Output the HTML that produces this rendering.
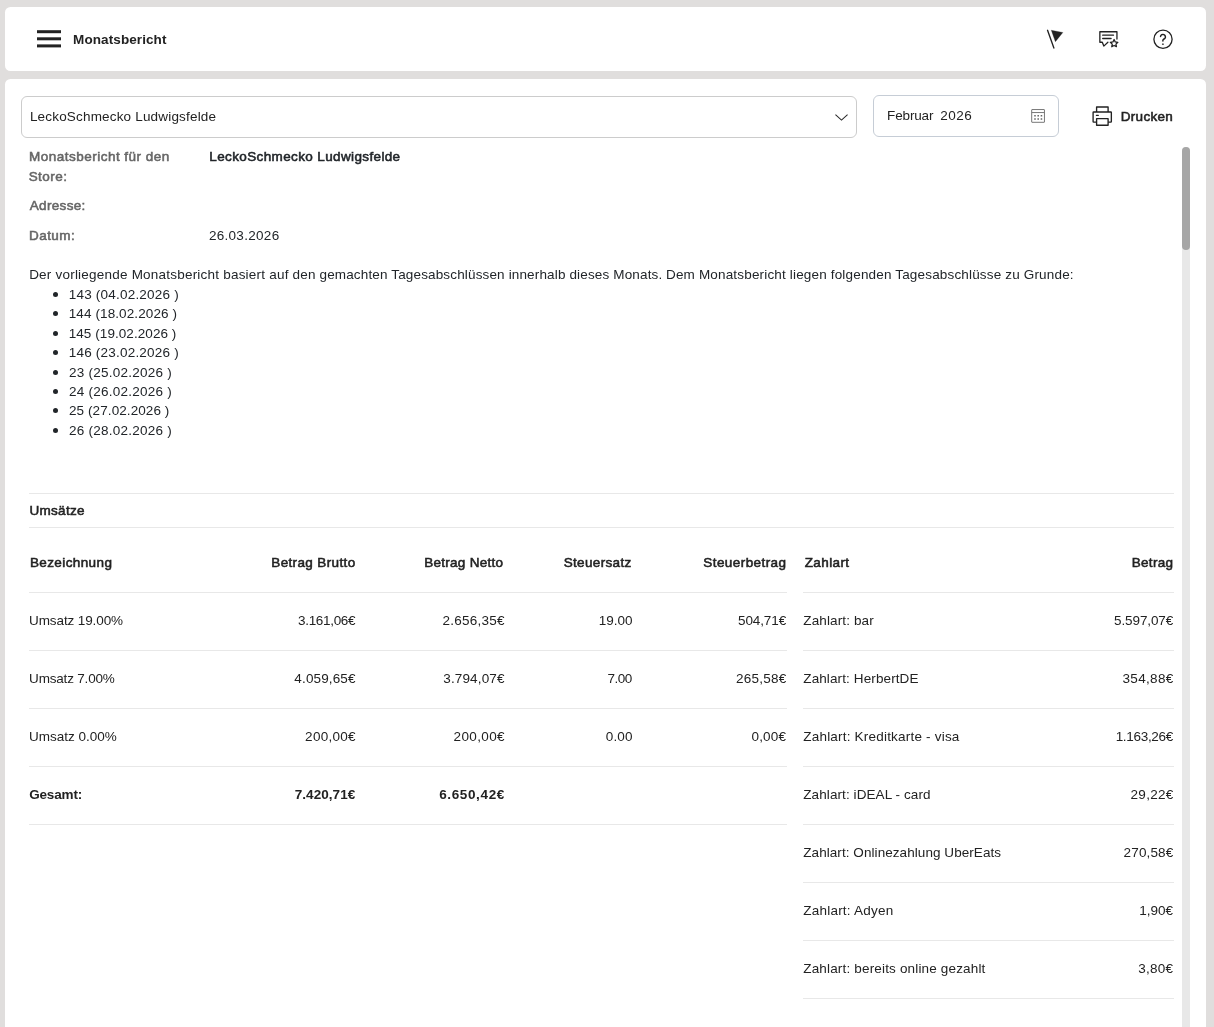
<!DOCTYPE html>
<html lang="de"><head><meta charset="utf-8"><title>Monatsbericht</title>
<style>
html,body{margin:0;padding:0}
body{width:1214px;height:1027px;overflow:hidden;background:#e0dedd;position:relative;font-family:"Liberation Sans",sans-serif;color:#222}
.abs{position:absolute}
.card{position:absolute;background:#fff}
.txt{position:absolute;left:0;top:0;width:1214px;height:1027px;will-change:transform}
.t{position:absolute;display:block;margin:0;padding:0;border:0;white-space:nowrap;line-height:20px;font-weight:400;list-style:none;text-align:left}
header,main,section,dl,p,ul,table,thead,tbody,tr,.toolbar,.date{display:block;margin:0;padding:0;border:0;position:static}
.hl{position:absolute;height:1px;background:#e8e8e8}
.bu{position:absolute;width:5.2px;height:5.2px;border-radius:50%;background:#212529}
</style></head><body>

<div class="card" style="left:5px;top:7px;width:1201px;height:64px;border-radius:5.5px"></div>
<div class="card" style="left:5px;top:79px;width:1201px;height:960px;border-radius:5.5px 5.5px 0 0"></div>
<!-- hamburger -->
<svg class="abs" style="left:37px;top:30px" width="24" height="18" viewBox="0 0 24 18"><rect x="0" y="0.2" width="24" height="3" fill="#222"/><rect x="0" y="7.3" width="24" height="3" fill="#222"/><rect x="0" y="14.4" width="24" height="3" fill="#222"/></svg>
<!-- flag -->
<svg class="abs" style="left:1044px;top:27px" width="24" height="24" viewBox="0 0 24 24"><path d="M3.54 3.3 L9.89 21.1" stroke="#222" stroke-width="1.35" stroke-linecap="round" fill="none"/><path d="M7.3 3.25 L18.85 5.5 L11.4 14.65 Z" fill="#222" stroke="#222" stroke-width="0.3" stroke-linejoin="round"/></svg>
<!-- feedback -->
<svg class="abs" style="left:1097px;top:27px" width="24" height="24" viewBox="0 0 24 24" fill="none" stroke="#222" stroke-width="1.3" stroke-linecap="round" stroke-linejoin="round"><path d="M19.95 12.1 V4.75 H2.85 V15.25 H5.3 L6.8 19.1 L10.9 15.2"/><path d="M5.7 8.2 H16.5 M5.7 11.5 H14.1" stroke-width="1.3"/><path d="M17.10 12.55 L18.25 14.92 L20.86 15.28 L18.95 17.10 L19.42 19.70 L17.10 18.45 L14.78 19.70 L15.25 17.10 L13.34 15.28 L15.95 14.92Z" stroke-width="1.3" stroke-linejoin="round"/></svg>
<!-- help -->
<svg class="abs" style="left:1151px;top:27px" width="24" height="24" viewBox="0 0 24 24" fill="none" stroke="#222" stroke-linecap="round" stroke-linejoin="round"><circle cx="12" cy="12.25" r="9.1" stroke-width="1.3"/><path d="M9.55 9.45 A2.45 2.45 0 1 1 13.95 11.3 C13.3 12.1 11.9 12.1 11.9 13.3 V14.05" stroke-width="1.5"/><rect x="10.95" y="16.55" width="1.9" height="1.3" rx="0.4" fill="#222" stroke="none"/></svg>
<!-- select -->
<div class="abs" style="left:21px;top:96px;width:834px;height:40px;border:1px solid #ccc;border-radius:6px;background:#fff"></div>
<svg class="abs" style="left:833px;top:112px" width="16" height="10" viewBox="0 0 16 10" fill="none" stroke="#2a2a2a" stroke-width="1.05"><path d="M2.45 2.55 L8.5 8.1 L14.55 2.55"/></svg>
<!-- date -->
<div class="abs" style="left:873px;top:95px;width:184px;height:40px;border:1px solid #c6cdd6;border-radius:6px;background:#fff"></div>
<svg class="abs" style="left:1031px;top:109px" width="14" height="14" viewBox="0 0 14 14" fill="none" stroke="#777" stroke-width="1"><rect x="0.7" y="0.55" width="12.75" height="12.75" rx="0.3"/><path d="M0.7 3.55 H13.45"/><g fill="#666" stroke="none"><rect x="3.20" y="6.00" width="1.6" height="1.6" rx=".3"/><rect x="6.40" y="6.00" width="1.6" height="1.6" rx=".3"/><rect x="9.65" y="6.00" width="1.6" height="1.6" rx=".3"/><rect x="3.20" y="9.24" width="1.6" height="1.6" rx=".3"/><rect x="6.40" y="9.24" width="1.6" height="1.6" rx=".3"/><rect x="9.65" y="9.24" width="1.6" height="1.6" rx=".3"/></g></svg>
<!-- print -->
<svg class="abs" style="left:1091px;top:105px" width="22" height="22" viewBox="0 0 22 22" fill="none" stroke="#222" stroke-width="1.35" stroke-linejoin="round"><path d="M5.6 6.95 V1.95 H17.1 V6.95"/><path d="M5.6 17.1 H2.6 a.5 .5 0 0 1 -.5 -.5 V7.45 a.5 .5 0 0 1 .5 -.5 H19.85 a.5 .5 0 0 1 .5 .5 V16.6 a.5 .5 0 0 1 -.5 .5 H17.1"/><rect x="5.6" y="13.65" width="11.5" height="6.55"/><path d="M5.4 10.4 H7.3" stroke-width="1.2" stroke-linecap="round"/></svg>
<!-- scrollbar -->
<div class="abs" style="left:1182px;top:147px;width:8px;height:900px;background:#e8e8e8;border-radius:4px"></div>
<div class="abs" style="left:1182px;top:147px;width:8px;height:103px;background:#a6a6a6;border-radius:4px"></div>

<div class="hl" style="left:29px;top:493px;width:1145px"></div>
<div class="hl" style="left:29px;top:527px;width:1145px"></div>
<div class="hl" style="left:29px;top:592px;width:758px"></div>
<div class="hl" style="left:29px;top:650px;width:758px"></div>
<div class="hl" style="left:29px;top:708px;width:758px"></div>
<div class="hl" style="left:29px;top:766px;width:758px"></div>
<div class="hl" style="left:29px;top:824px;width:758px"></div>
<div class="hl" style="left:803px;top:592px;width:371px"></div>
<div class="hl" style="left:803px;top:650px;width:371px"></div>
<div class="hl" style="left:803px;top:708px;width:371px"></div>
<div class="hl" style="left:803px;top:766px;width:371px"></div>
<div class="hl" style="left:803px;top:824px;width:371px"></div>
<div class="hl" style="left:803px;top:882px;width:371px"></div>
<div class="hl" style="left:803px;top:940px;width:371px"></div>
<div class="hl" style="left:803px;top:998px;width:371px"></div>
<div class="bu" style="left:52.9px;top:291.9px"></div>
<div class="bu" style="left:52.9px;top:310.9px"></div>
<div class="bu" style="left:52.9px;top:330.9px"></div>
<div class="bu" style="left:52.9px;top:349.9px"></div>
<div class="bu" style="left:52.9px;top:369.9px"></div>
<div class="bu" style="left:52.9px;top:388.9px"></div>
<div class="bu" style="left:52.9px;top:407.9px"></div>
<div class="bu" style="left:52.9px;top:427.9px"></div>
<div class="txt">
<header><h1 class="t" style="left:73.12px;top:30px;font-size:13.5px;letter-spacing:0.086px;font-weight:700">Monatsbericht</h1></header>
<main>
<div class="toolbar"><span class="t" style="left:29.92px;top:107px;font-size:13.5px;letter-spacing:0.181px">LeckoSchmecko Ludwigsfelde</span><span class="date"><span class="t" style="left:887.07px;top:106px;font-size:13.5px;letter-spacing:-0.146px">Februar</span><span class="t" style="left:940.29px;top:106px;font-size:13.5px;letter-spacing:0.500px">2026</span></span><span class="t" role="button" style="left:1120.76px;top:107px;font-size:13.5px;letter-spacing:0.309px;-webkit-text-stroke:0.55px">Drucken</span></div>
<dl><dt class="t" style="left:29.12px;top:147px;font-size:13.5px;letter-spacing:0.478px;-webkit-text-stroke:0.55px;color:#666">Monatsbericht für den</dt><dt class="t" style="left:28.67px;top:167px;font-size:13.5px;letter-spacing:0.450px;-webkit-text-stroke:0.55px;color:#666">Store:</dt><dd class="t" style="left:209.33px;top:147px;font-size:13.5px;letter-spacing:0.368px;-webkit-text-stroke:0.55px;color:#212529">LeckoSchmecko Ludwigsfelde</dd><dt class="t" style="left:29.77px;top:196px;font-size:13.5px;letter-spacing:0.330px;-webkit-text-stroke:0.55px;color:#666">Adresse:</dt><dt class="t" style="left:29.12px;top:226px;font-size:13.5px;letter-spacing:0.405px;-webkit-text-stroke:0.55px;color:#666">Datum:</dt><dd class="t" style="left:208.90px;top:226px;font-size:13.5px;letter-spacing:0.300px;color:#212529">26.03.2026</dd></dl>
<p><span class="t" style="left:29.14px;top:265px;font-size:13.5px;letter-spacing:0.216px;color:#212529">Der vorliegende Monatsbericht basiert auf den</span> <span class="t" style="left:319.47px;top:265px;font-size:13.5px;letter-spacing:0.150px;color:#212529">gemachten Tagesabschlüssen innerhalb dieses Monats.</span> <span class="t" style="left:666.00px;top:265px;font-size:13.5px;letter-spacing:0.168px;color:#212529">Dem Monatsbericht liegen folgenden Tagesabschlüsse zu Grunde:</span></p>
<ul><li class="t" style="left:68.72px;top:285px;font-size:13.5px;letter-spacing:0.212px;color:#212529">143 (04.02.2026 )</li><li class="t" style="left:68.72px;top:304px;font-size:13.5px;letter-spacing:0.105px;color:#212529">144 (18.02.2026 )</li><li class="t" style="left:68.72px;top:324px;font-size:13.5px;letter-spacing:0.066px;color:#212529">145 (19.02.2026 )</li><li class="t" style="left:68.72px;top:343px;font-size:13.5px;letter-spacing:0.212px;color:#212529">146 (23.02.2026 )</li><li class="t" style="left:69.02px;top:363px;font-size:13.5px;letter-spacing:0.241px;color:#212529">23 (25.02.2026 )</li><li class="t" style="left:69.02px;top:382px;font-size:13.5px;letter-spacing:0.241px;color:#212529">24 (26.02.2026 )</li><li class="t" style="left:69.02px;top:401px;font-size:13.5px;letter-spacing:0.085px;color:#212529">25 (27.02.2026 )</li><li class="t" style="left:69.02px;top:421px;font-size:13.5px;letter-spacing:0.241px;color:#212529">26 (28.02.2026 )</li></ul>
<section><h3 class="t" style="left:29.38px;top:501px;font-size:13.5px;letter-spacing:0.328px;-webkit-text-stroke:0.55px">Umsätze</h3>
<table class="umsaetze"><thead><tr><th class="t" style="left:29.92px;top:553px;font-size:13.5px;letter-spacing:0.393px;-webkit-text-stroke:0.55px">Bezeichnung</th><th class="t" style="left:271.28px;top:553px;font-size:13.5px;letter-spacing:0.362px;-webkit-text-stroke:0.55px">Betrag Brutto</th><th class="t" style="left:424.28px;top:553px;font-size:13.5px;letter-spacing:0.268px;-webkit-text-stroke:0.55px">Betrag Netto</th><th class="t" style="left:563.63px;top:553px;font-size:13.5px;letter-spacing:0.350px;-webkit-text-stroke:0.55px">Steuersatz</th><th class="t" style="left:703.30px;top:553px;font-size:13.5px;letter-spacing:0.426px;-webkit-text-stroke:0.55px">Steuerbetrag</th></tr></thead><tbody>
<tr><td class="t" style="left:29.09px;top:611px;font-size:13.5px;letter-spacing:-0.109px">Umsatz 19.00%</td><td class="t" style="left:298.12px;top:611px;font-size:13.5px;letter-spacing:-0.336px">3.161,06€</td><td class="t" style="left:442.54px;top:611px;font-size:13.5px;letter-spacing:0.243px">2.656,35€</td><td class="t" style="left:598.77px;top:611px;font-size:13.5px;letter-spacing:-0.012px">19.00</td><td class="t" style="left:738.05px;top:611px;font-size:13.5px;letter-spacing:-0.116px">504,71€</td></tr>
<tr><td class="t" style="left:29.09px;top:669px;font-size:13.5px;letter-spacing:-0.186px">Umsatz 7.00%</td><td class="t" style="left:294.37px;top:669px;font-size:13.5px;letter-spacing:0.139px">4.059,65€</td><td class="t" style="left:443.23px;top:669px;font-size:13.5px;letter-spacing:0.157px">3.794,07€</td><td class="t" style="left:607.44px;top:669px;font-size:13.5px;letter-spacing:-0.444px">7.00</td><td class="t" style="left:735.93px;top:669px;font-size:13.5px;letter-spacing:0.273px">265,58€</td></tr>
<tr><td class="t" style="left:29.09px;top:727px;font-size:13.5px;letter-spacing:-0.009px">Umsatz 0.00%</td><td class="t" style="left:305.12px;top:727px;font-size:13.5px;letter-spacing:0.281px">200,00€</td><td class="t" style="left:453.62px;top:727px;font-size:13.5px;letter-spacing:0.358px">200,00€</td><td class="t" style="left:605.71px;top:727px;font-size:13.5px;letter-spacing:0.170px">0.00</td><td class="t" style="left:751.45px;top:727px;font-size:13.5px;letter-spacing:0.184px">0,00€</td></tr>
<tr><td class="t" style="left:29.13px;top:785px;font-size:13.5px;letter-spacing:-0.149px;font-weight:700">Gesamt:</td><td class="t" style="left:294.73px;top:785px;font-size:13.5px;letter-spacing:0.055px;font-weight:700">7.420,71€</td><td class="t" style="left:439.13px;top:785px;font-size:13.5px;letter-spacing:0.641px;font-weight:700">6.650,42€</td></tr>
</tbody></table>
<table class="zahlarten"><thead><tr><th class="t" style="left:804.75px;top:553px;font-size:13.5px;letter-spacing:0.377px;-webkit-text-stroke:0.55px">Zahlart</th><th class="t" style="left:1131.64px;top:553px;font-size:13.5px;letter-spacing:0.334px;-webkit-text-stroke:0.55px">Betrag</th></tr></thead><tbody>
<tr><td class="t" style="left:803.27px;top:611px;font-size:13.5px;letter-spacing:0.127px">Zahlart: bar</td><td class="t" style="left:1114.07px;top:611px;font-size:13.5px;letter-spacing:-0.113px">5.597,07€</td></tr>
<tr><td class="t" style="left:803.27px;top:669px;font-size:13.5px;letter-spacing:0.114px">Zahlart: HerbertDE</td><td class="t" style="left:1122.44px;top:669px;font-size:13.5px;letter-spacing:0.337px">354,88€</td></tr>
<tr><td class="t" style="left:803.27px;top:727px;font-size:13.5px;letter-spacing:0.204px">Zahlart: Kreditkarte - visa</td><td class="t" style="left:1115.68px;top:727px;font-size:13.5px;letter-spacing:-0.311px">1.163,26€</td></tr>
<tr><td class="t" style="left:803.27px;top:785px;font-size:13.5px;letter-spacing:0.087px">Zahlart: iDEAL - card</td><td class="t" style="left:1130.62px;top:785px;font-size:13.5px;letter-spacing:0.255px">29,22€</td></tr>
<tr><td class="t" style="left:803.27px;top:843px;font-size:13.5px;letter-spacing:0.065px">Zahlart: Onlinezahlung UberEats</td><td class="t" style="left:1123.62px;top:843px;font-size:13.5px;letter-spacing:0.131px">270,58€</td></tr>
<tr><td class="t" style="left:803.27px;top:901px;font-size:13.5px;letter-spacing:0.220px">Zahlart: Adyen</td><td class="t" style="left:1139.29px;top:901px;font-size:13.5px;letter-spacing:-0.025px">1,90€</td></tr>
<tr><td class="t" style="left:803.27px;top:959px;font-size:13.5px;letter-spacing:0.166px">Zahlart: bereits online gezahlt</td><td class="t" style="left:1138.25px;top:959px;font-size:13.5px;letter-spacing:0.263px">3,80€</td></tr>
</tbody></table>
</section></main>
</div>
</body></html>
